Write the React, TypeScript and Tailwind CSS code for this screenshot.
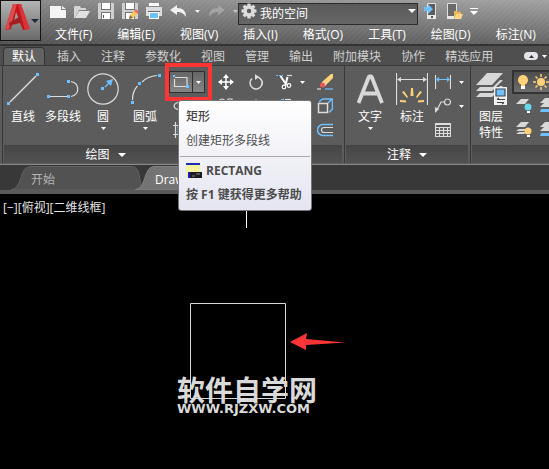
import React from 'react';

const menus = ['文件(F)', '编辑(E)', '视图(V)', '插入(I)', '格式(O)', '工具(T)', '绘图(D)', '标注(N)'];
const ribbonTabs = ['插入', '注释', '参数化', '视图', '管理', '输出', '附加模块', '协作', '精选应用'];
const gearAngles = [0, 45, 90, 135, 180, 225, 270, 315];

const Caret = ({ className = '' }: { className?: string }) => (
  <svg className={`shrink-0 ${className}`} width="5" height="3" viewBox="0 0 5 3" aria-hidden="true">
    <path d="M0 0h5L2.5 3z" fill="currentColor" />
  </svg>
);

const WideCaret = ({ className = '' }: { className?: string }) => (
  <svg className={`shrink-0 ${className}`} width="8" height="4" viewBox="0 0 8 4" aria-hidden="true">
    <path d="M0 0h8L4 4z" fill="currentColor" />
  </svg>
);

interface IconProps {
  size?: number;
  className?: string;
  children: React.ReactNode;
}

// Line icon base, drawn on a grid of its own size
const Icon = ({ size = 16, className = '', children }: IconProps) => (
  <svg
    className={`shrink-0 ${className}`}
    width={size}
    height={size}
    viewBox={`0 0 ${size} ${size}`}
    fill="none"
    stroke="#dcdcdc"
    strokeWidth="1.2"
    aria-hidden="true"
  >
    {children}
  </svg>
);

const Grip = ({ x, y, s = 3 }: { x: number; y: number; s?: number }) => (
  <rect x={x} y={y} width={s} height={s} fill="#6fc0ff" stroke="none" />
);

interface ToolProps {
  label: string;
  className?: string;
  caret?: boolean;
  children: React.ReactNode;
}

const BigTool = ({ label, className = '', caret, children }: ToolProps) => (
  <button type="button" className={`flex shrink-0 flex-col items-center pt-[3px] text-white ${className}`}>
    {children}
    <span className="mt-1 whitespace-pre-line text-xs leading-4">{label}</span>
    {caret && <Caret className="mt-0.5" />}
  </button>
);

const SmallTool = ({ label, className = '', caret, children }: ToolProps) => (
  <button type="button" aria-label={label} className={`flex h-6 shrink-0 items-center gap-2 text-white ${className}`}>
    {children}
    {caret && <Caret />}
  </button>
);

interface PanelProps {
  title?: string;
  className?: string;
  children: React.ReactNode;
}

const Panel = ({ title, className = '', children }: PanelProps) => (
  <section className={`flex shrink-0 flex-col border-l border-[#383838] ${className}`}>
    <div className="flex h-[79px] items-start pt-1">{children}</div>
    <div className="ml-px mr-0.5 flex h-[18px] items-center justify-center gap-2 bg-linear-to-b from-[#454545] to-[#525252] pt-0.5 text-xs text-white">
      {title && <span>{title}</span>}
      {title && <WideCaret />}
    </div>
  </section>
);

const Sheet = ({ y }: { y: number }) => <path d={`M5 ${y}h8l-4 5H0z`} fill="#d8d8d8" stroke="none" />;

const Bulb = () => (
  <Icon>
    <circle cx="8" cy="6" r="5" fill="#ffd27a" stroke="none" />
    <path d="M6 10h4v2H6z" fill="#ffd27a" stroke="none" />
    <path d="M6 12h4v3H6z" fill="#fff" stroke="none" />
  </Icon>
);

const Sun = () => (
  <Icon>
    <circle cx="8" cy="8" r="4" fill="#ffd27a" stroke="none" />
    <path d="M8 0v3M8 13v3M0 8h3M13 8h3M2.5 2.5l2 2M11.5 11.5l2 2M2.5 13.5l2-2M11.5 4.5l2-2" stroke="#ffd27a" strokeWidth="1.5" />
  </Icon>
);

const QuickAccess = () => (
  <div className="flex h-[22px] items-center">
    <div className="flex gap-2 pl-[9px]">
      <button type="button" aria-label="新建">
        <svg width="16" height="16" viewBox="0 0 16 16" fill="#f4f4f4">
          <path d="M0 3h11v4h5v8H0zM12 3l4 3h-4z" />
        </svg>
      </button>
      <button type="button" aria-label="打开">
        <svg width="16" height="16" viewBox="0 0 16 16">
          <path d="M0 4l1-1h5l1 2h5v2H5L1 15H0z" fill="#d4d4d4" />
          <path d="M5 8h11l-4 7H1z" fill="#e0e0e0" />
        </svg>
      </button>
      <button type="button" aria-label="保存">
        <svg width="16" height="16" viewBox="0 0 16 16">
          <path d="M0 0h16v16H0z" fill="#d0d0d0" />
          <path d="M3 0h10v7H3zM3 9h10v7H3z" fill="#757575" />
          <path d="M4 0h8v6H4zM4 10h8v6H4z" fill="#fff" />
          <path d="M5 12h1v3H5z" fill="#555" />
        </svg>
      </button>
      <button type="button" aria-label="另存为">
        <svg width="16" height="16" viewBox="0 0 16 16">
          <path d="M0 0h16v16H0z" fill="#d0d0d0" />
          <path d="M3 0h10v7H3zM3 9h10v7H3z" fill="#757575" />
          <path d="M4 0h8v6H4zM4 10h8v6H4z" fill="#fff" />
          <path d="M7 16l1-4 5-5 3 3-5 5z" fill="#ffc85e" />
          <path d="M12 8l2-2 2 2v3z" fill="#f06a6a" />
          <path d="M7 16l1-4 3 3z" fill="#7a6a55" />
        </svg>
      </button>
      <button type="button" aria-label="打印">
        <svg width="16" height="16" viewBox="0 0 16 16">
          <path d="M3 0h10v3H3z" fill="#fff" />
          <path d="M0 4h16v9H0z" fill="#dcdcdc" />
          <path d="M2 8h12v1H2z" fill="#666" />
          <path d="M3 9h10v7H3z" fill="#fff" />
          <path d="M4 10h8v5H4z" fill="#6fc0ff" />
        </svg>
      </button>
    </div>
    <button type="button" aria-label="放弃" className="ml-2 flex items-center gap-2 text-[#f0f0f0]">
      <svg width="17" height="12" viewBox="0 0 17 12">
        <path d="M0 5l7-5v3c6 0 9 3 9 9-2-3-4-5-9-5v3z" fill="#f0f0f0" />
      </svg>
      <Caret />
    </button>
    <button type="button" aria-label="重做" className="ml-2 flex items-center gap-2 text-[#c8c8c8]">
      <svg width="17" height="12" viewBox="0 0 17 12">
        <path d="M17 5l-7-5v3C4 3 1 6 1 12c2-3 4-5 9-5v3z" fill="#a4a4a4" />
      </svg>
      <Caret />
    </button>
    <div className="relative h-[22px] w-[180px] shrink-0">
      <select
        aria-label="工作空间"
        className="size-full appearance-none border border-[#2c2c2c] bg-linear-to-b from-[#5a5a5a] to-[#666666] pl-[21px] text-xs text-white"
      >
        <option>我的空间</option>
      </select>
      <Icon className="pointer-events-none absolute left-[3px] top-[3px]">
        {gearAngles.map(angle => (
          <path key={angle} d="M6.500 0.500h3l.5 4H6z" fill="#dcdcdc" stroke="none" transform={`rotate(${angle} 8 8)`} />
        ))}
        <circle cx="8" cy="8" r="4" strokeWidth="3.500" />
      </Icon>
      <WideCaret className="pointer-events-none absolute right-[2px] top-[9px] text-white" />
    </div>
    <button type="button" aria-label="移动应用" className="ml-[6px]">
      <svg width="14" height="18" viewBox="0 0 14 18">
        <path d="M3.500 1.500h8v15h-8z" fill="#5c5c5c" stroke="#e0e0e0" />
        <path d="M3 13h9v4H3z" fill="#e8e8e8" />
        <path d="M7 14h2v2H7z" fill="#555" />
        <path d="M0 5h4V2l5 5-5 5V9H0z" fill="#6fc0ff" />
      </svg>
    </button>
    <button type="button" aria-label="从移动设备打开" className="ml-2">
      <svg width="17" height="18" viewBox="0 0 17 18">
        <path d="M1.500 1.500h9v15h-9z" fill="#6a6a6a" stroke="#e0e0e0" />
        <path d="M1 14h7v3H1z" fill="#e8e8e8" />
        <path d="M8 9h3l1 1h3v2h-5l-2 5z" fill="#f0b850" />
        <path d="M10 12h7l-2 5H8z" fill="#ffd68a" />
      </svg>
    </button>
    <button type="button" aria-label="自定义" className="ml-[7px] flex flex-col items-center gap-[2px] text-white">
      <span className="h-px w-2 bg-white" />
      <WideCaret />
    </button>
  </div>
);

const DrawPanel = () => (
  <Panel title="绘图" className="w-[207px]">
    <BigTool label="直线" className="w-10">
      <Icon size={32}>
        <path d="M3 29L29 3" strokeWidth="1.5" />
        <Grip x={0} y={29} />
        <Grip x={29} y={0} />
      </Icon>
    </BigTool>
    <BigTool label="多段线" className="w-10">
      <Icon size={32}>
        <path d="M2 23.500h19M24 8.500c9 2 9 13 0 15" />
        <Grip x={0} y={22} />
        <Grip x={20} y={22} />
        <Grip x={20} y={7} />
      </Icon>
    </BigTool>
    <BigTool label="圆" className="w-10" caret>
      <Icon size={32}>
        <circle cx="16" cy="16" r="15.200" />
        <path d="M18 14l5-5" stroke="#6fc0ff" />
        <path d="M26 6l-2 7-5-5z" fill="#6fc0ff" stroke="none" />
        <Grip x={14} y={14} />
      </Icon>
    </BigTool>
    <BigTool label="圆弧" className="w-11" caret>
      <Icon size={32}>
        <path d="M3.500 27c0-6 2-11 5-14M13 9c4-4 9-6 15-6.500" />
        <Grip x={2} y={28} />
        <Grip x={9} y={9} />
        <Grip x={29} y={1} />
      </Icon>
    </BigTool>
    <div className="flex flex-col pl-[2px]">
      <div className="relative flex h-6 w-9 items-center">
        <button
          type="button"
          aria-label="矩形"
          className="flex h-[22px] w-6 items-center justify-center border border-[#2e2e2e] bg-linear-to-b from-[#666666] to-[#858585]"
        >
          <Icon>
            <path d="M2 3.500h12v9H1.500V5" />
            <Grip x={0} y={1} s={2} />
            <Grip x={13} y={11} />
          </Icon>
        </button>
        <button
          type="button"
          aria-label="矩形选项"
          className="flex h-[22px] w-3 items-center justify-center border border-l-0 border-[#2e2e2e] bg-linear-to-b from-[#666666] to-[#858585] text-white"
        >
          <Caret />
        </button>
        <span className="pointer-events-none absolute -left-1 -top-[7px] h-[38px] w-[47px] border-4 border-[#ff3535]" />
      </div>
      <SmallTool label="椭圆" className="pl-1">
        <Icon>
          <ellipse cx="8" cy="8" rx="7" ry="4" />
        </Icon>
      </SmallTool>
      <SmallTool label="图案填充" className="pl-1">
        <Icon>
          <path d="M2.500 0v16M0 3.500h16M0 12.500h16" />
          <path d="M5 5v7M8 5v7" stroke="#6fc0ff" strokeDasharray="1 1" />
        </Icon>
      </SmallTool>
    </div>
  </Panel>
);

const ModifyPanel = () => (
  <Panel className="w-[135px]">
    <div className="flex w-full pl-2">
      <div className="flex w-[30px] flex-col">
        <SmallTool label="移动">
          <Icon>
            <path d="M8 2v12M2 8h12" strokeWidth="1.500" stroke="#fff" />
            <path d="M8 0l3 4H5zM8 16l3-4H5zM0 8l4-3v6zM16 8l-4-3v6z" fill="#fff" stroke="none" />
          </Icon>
        </SmallTool>
        <SmallTool label="复制">
          <Icon>
            <circle cx="4" cy="4" r="3" />
            <path d="M10 1h4v3h-4z" />
          </Icon>
        </SmallTool>
      </div>
      <div className="flex w-[28px] flex-col">
        <SmallTool label="旋转">
          <Icon>
            <path d="M9 3a6 6 0 1 1-5 1.500M14 7a6 6 0 0 1 0 4" strokeWidth="1.5" />
            <path d="M7 0l4 3-4 3z" fill="#dcdcdc" stroke="none" />
          </Icon>
        </SmallTool>
        <SmallTool label="镜像">
          <Icon>
            <path d="M8 1v14" stroke="#6fc0ff" strokeDasharray="2 1" />
          </Icon>
        </SmallTool>
      </div>
      <div className="flex w-[41px] flex-col">
        <SmallTool label="修剪" caret>
          <Icon>
            <path d="M0 1.500h7" stroke="#6fc0ff" strokeDasharray="2 1" />
            <path d="M11 1.500h5" />
            <path d="M4.500 2l6 9M11.500 3l-2 8" stroke="#fff" strokeWidth="2" />
            <circle cx="8" cy="13" r="1.800" stroke="#fff" />
            <circle cx="13" cy="11.500" r="1.800" stroke="#fff" />
          </Icon>
        </SmallTool>
        <SmallTool label="圆角" caret>
          <Icon>
            <path d="M2 12C2 5 4 2 8 1.500" stroke="#6fc0ff" strokeWidth="2" />
            <path d="M9 1.500h6" />
          </Icon>
        </SmallTool>
      </div>
      <div className="flex flex-col">
        <SmallTool label="删除">
          <Icon>
            <path d="M6 7l8-7h2v4l-7 7z" fill="#ffd27a" stroke="none" />
            <path d="M6 7l3 4-1.500 1.500-3-3z" fill="#fff" stroke="none" />
            <circle cx="5.500" cy="11" r="2.500" fill="#ee5555" stroke="none" />
            <path d="M0 15h4" />
            <path d="M8 15h8" stroke="#6fc0ff" />
          </Icon>
        </SmallTool>
        <SmallTool label="分解">
          <Icon>
            <path d="M2 4l3.500-3h10v10L12 14.500M11 5l4-4" stroke="#6fc0ff" strokeWidth="1.500" />
            <path d="M1.500 5.500h9v9h-9z" strokeWidth="1.500" />
          </Icon>
        </SmallTool>
        <SmallTool label="偏移">
          <Icon>
            <path d="M16 2.500H6a5.500 5.500 0 0 0 0 11h10" stroke="#6fc0ff" strokeWidth="1.500" />
            <path d="M16 5.500H7a2.500 2.500 0 0 0 0 5h9" />
          </Icon>
        </SmallTool>
      </div>
    </div>
  </Panel>
);

const AnnotatePanel = () => (
  <Panel title="注释" className="w-[126px]">
    <BigTool label="文字" className="ml-1 w-[42px]" caret>
      <Icon size={32}>
        <path d="M4.500 30L15 3.500h2.500L28 30M8.500 20.500h15" strokeWidth="3.800" stroke="#d8d8d8" strokeLinejoin="bevel" />
      </Icon>
    </BigTool>
    <BigTool label="标注" className="w-[42px]">
      <Icon size={32}>
        <path d="M0.500 0v32M31.500 0v32M2 6.500h28" />
        <path d="M1 6.500l4-2.500v5zM31 6.500l-4-2.500v5z" fill="#dcdcdc" stroke="none" />
        <path d="M15 15h2l.5 8h-3zM6 19l2-1 4 6-1 1zM26 19l-2-1-4 6 1 1zM4 29v-2l6 .500v2zM28 29v-2l-6 .500v2z" fill="#ffd27a" stroke="none" />
      </Icon>
    </BigTool>
    <div className="flex flex-col pl-[2px]">
      <SmallTool label="线性" caret>
        <Icon>
          <path d="M0.500 1v14M15.500 1v14" />
          <path d="M2 5.500h12M4 3.500l-2 2 2 2M12 3.500l2 2-2 2" stroke="#6fc0ff" />
        </Icon>
      </SmallTool>
      <SmallTool label="引线" caret>
        <Icon>
          <circle cx="12.500" cy="4" r="3" />
          <path d="M9 4H6L2 12" />
          <path d="M0 15V9l4 2z" fill="#dcdcdc" stroke="none" />
        </Icon>
      </SmallTool>
      <SmallTool label="表格">
        <Icon>
          <path d="M.5 1.500h15v13H.5zM.5 2.500h15M.5 5.500h15M.5 8.500h15M.5 11.500h15M4.500 5v9M8.500 5v9M12.500 5v9" />
        </Icon>
      </SmallTool>
    </div>
  </Panel>
);

const LayerPanel = () => (
  <Panel className="min-w-40 flex-1">
    <BigTool label={'图层\n特性'} className="w-10">
      <Icon size={32}>
        <path d="M12 0h16L17 12H1z" fill="#d8d8d8" stroke="none" />
        <path d="M25 7h3L17 18H1l4-4h13zM25 13h3L17 24H1l4-4h13z" fill="#d8d8d8" stroke="none" />
        <path d="M19 14h13v18H19z" fill="#f0f0f0" stroke="none" />
        <path d="M21 16h9v7h-9z" fill="#6fc0ff" stroke="#444" />
        <path d="M22 26.500h8M22 29.500h7M24 25l-2 1.500M27 31l2-1.500" stroke="#444" />
      </Icon>
    </BigTool>
    <div className="flex flex-1 flex-col pl-px">
      <button
        type="button"
        aria-label="图层"
        className="flex h-6 items-center gap-[2px] border-2 border-[#333333] bg-linear-to-b from-[#4c4c4c] to-[#6e6e6e] pl-px"
      >
        <Bulb />
        <Sun />
      </button>
      <div className="flex gap-2 pl-1">
        <SmallTool label="关闭图层">
          <Icon>
            <Sheet y={1} />
            <circle cx="12" cy="9" r="3.500" fill="#66d9e8" stroke="none" />
            <path d="M11 13h3v2h-3z" fill="#fff" stroke="none" />
          </Icon>
        </SmallTool>
        <SmallTool label="冻结图层">
          <Icon>
            <Sheet y={0} />
            <Sheet y={4} />
            <path d="M1 11h12l-2 3H0z" fill="#6fc0ff" stroke="none" />
          </Icon>
        </SmallTool>
      </div>
      <div className="flex gap-2 pl-1">
        <SmallTool label="打开所有图层">
          <Icon>
            <Sheet y={0} />
            <path d="M3 7h8l-3 2H0zM3 10h7l-2 2H0z" fill="#d8d8d8" stroke="none" />
            <circle cx="12" cy="9" r="3.500" fill="#ffd27a" stroke="none" />
            <path d="M11 13h3v2h-3z" fill="#fff" stroke="none" />
          </Icon>
        </SmallTool>
        <SmallTool label="解冻图层">
          <Icon>
            <Sheet y={0} />
            <Sheet y={4} />
            <path d="M1 11h12l-2 3H0z" fill="#6fc0ff" stroke="none" />
          </Icon>
        </SmallTool>
      </div>
    </div>
  </Panel>
);

const FileTab = ({ label, active }: { label: string; active?: boolean }) => (
  <button type="button" className={`relative -mr-2 h-6 w-[132px] shrink-0 pl-5 pt-1 text-left text-xs ${active ? 'text-white' : 'text-[#b4b4b4]'}`}>
    <svg className="absolute inset-0" width="132" height="24" viewBox="0 0 132 24" aria-hidden="true">
      <path
        d="M0 24C12 22 8 1 19 .5h102c10 .5 6 17 11 23.500z"
        fill={active ? '#747474' : '#525252'}
        stroke={active ? '#808080' : '#606060'}
      />
    </svg>
    <span className="relative">{label}</span>
  </button>
);

// Hover help of the rectangle command
const Tooltip = () => (
  <div
    role="tooltip"
    className="absolute left-[178px] top-[100px] z-10 w-[134px] rounded-[3px] border border-[#767676] bg-linear-to-b from-white to-[#e4e5f0] px-[7px] pb-[7px] pt-2 text-xs leading-4 text-[#4c4c4c]"
  >
    <p className="font-medium text-[#444444]">矩形</p>
    <p className="mt-2 whitespace-nowrap">创建矩形多段线</p>
    <hr className="-mx-[6px] mt-[7px] border-[#a8a8a8]" />
    <div className="mt-[6px] flex items-center gap-1">
      <svg width="16" height="16" viewBox="0 0 16 16" aria-hidden="true">
        <path d="M0 0h14v13H0z" fill="#f4f4a0" />
        <path d="M0 0h14v2H0z" fill="#1a2fb0" />
        <path d="M2 9h14v6H2z" fill="#1c1c1c" />
        <path d="M2 9h2v6H2z" fill="#1a1ad0" />
        <path d="M6 13h3M10 11h4" stroke="#888" />
      </svg>
      <b>RECTANG</b>
    </div>
    <p className="mt-2 whitespace-nowrap font-bold">按 F1 键获得更多帮助</p>
  </div>
);

export default function App() {
  return (
    <div className="relative flex min-h-screen w-full flex-col overflow-hidden bg-black font-['Open_Sans','Noto_Sans_CJK_SC',sans-serif]">
      <header className="flex border-b-2 border-[#333333] bg-[repeating-linear-gradient(135deg,rgba(255,255,255,0.04)_0px,rgba(255,255,255,0.04)_1px,transparent_2px,transparent_4px),linear-gradient(to_right,rgba(0,0,0,0.16),transparent),linear-gradient(to_bottom,#a2a2a2,#636363)]">
        <button
          type="button"
          aria-label="应用程序菜单"
          className="flex h-[41px] w-[41px] shrink-0 items-center gap-px border border-[#151515] bg-linear-to-b from-[#b4b4b4] to-[#6a6a6a] pl-[3px] text-[#1f2a38]"
        >
          <svg width="26" height="28" viewBox="0 0 26 28" className="mb-2 shrink-0" aria-hidden="true">
            <path d="M9 1h8l8 25-6 1-3-7-8 2-1 4-6 1z" fill="#c4161c" />
            <path d="M9 1h4L6 25l-5 2z" fill="#e04a4a" />
            <path d="M12 9l3 7-5 2z" fill="#999999" />
            <path d="M14 1h3l9 25-5 1z" fill="#d8353a" />
            <path d="M5 20l10-6 3 5-10 2-2 4z" fill="#9c1f24" />
          </svg>
          <WideCaret />
        </button>
        <div className="min-w-0 flex-1">
          <QuickAccess />
          <nav className="flex h-[22px] items-center gap-[25px] whitespace-nowrap pl-[14px] pt-[3px] text-xs text-white">
            {menus.map(menu => (
              <button key={menu} type="button">
                {menu}
              </button>
            ))}
          </nav>
        </div>
      </header>

      <div className="flex h-5 items-end gap-5 whitespace-nowrap border-b border-[#3a3a3a] bg-[#4f4f4f] pl-[3px] text-xs text-[#d0d0d0]">
        <button type="button" className="-mr-2 h-[18px] rounded-t-sm border border-b-0 border-[#333333] bg-[#626262] px-2 text-white">
          默认
        </button>
        {ribbonTabs.map(tab => (
          <button key={tab} type="button" className="h-[18px] pt-px">
            {tab}
          </button>
        ))}
        <button type="button" aria-label="最小化功能区" className="ml-[11px] flex h-[18px] items-center gap-1 text-white">
          <span className="flex h-2 w-[14px] items-center justify-center rounded-sm bg-[#e4e4ea] text-[#333333]">
            <Caret className="rotate-180" />
          </span>
          <Caret />
        </button>
      </div>

      <main className="flex border-b border-[#8a8a8a] bg-[#5c5c5c] pb-px pl-[2px]">
        <DrawPanel />
        <ModifyPanel />
        <AnnotatePanel />
        <LayerPanel />
      </main>

      <div className="flex border-b-4 border-[#5a5a5a] bg-[#383838] pl-[11px] pt-px">
        <FileTab label="开始" />
        <FileTab label="Drawing1" active />
      </div>

      <div className="relative min-h-[275px] flex-1 bg-black">
        <p className="whitespace-nowrap pl-[3px] pt-[6px] text-xs leading-4 text-[#e4e4e4]">[−][俯视][二维线框]</p>
        <svg className="absolute left-0 top-0" width="360" height="260" viewBox="0 0 360 260" fill="none" aria-hidden="true">
          <path d="M246.500 0v34" stroke="#fff" />
          <path d="M190.500 109.500h95v95h-95z" stroke="#d8d8d8" />
          <path d="M290 148l17-9-1 6 39 3.500-39 2.500v5z" fill="#ff3535" />
        </svg>
        <div className="absolute left-[177px] top-[181px] whitespace-nowrap text-[#d9d9d9]">
          <p className="font-['Noto_Sans_CJK_SC',sans-serif] text-[28px] font-bold leading-7">软件自学网</p>
          <p className="font-['DejaVu_Sans',sans-serif] text-[13px] font-bold leading-3">WWW.RJZXW.COM</p>
        </div>
      </div>

      <Tooltip />
    </div>
  );
}
